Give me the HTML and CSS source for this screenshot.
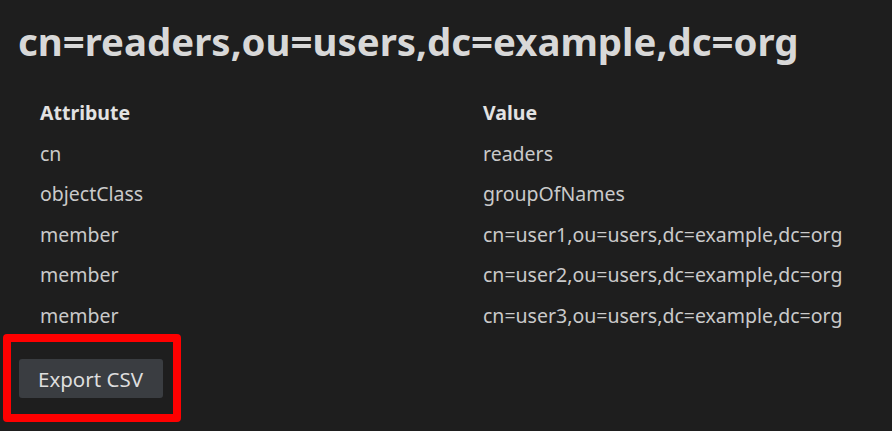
FILE: index.html
```html
<!DOCTYPE html>
<html lang="en">
<head>
<meta charset="utf-8">
<title>cn=readers,ou=users,dc=example,dc=org</title>
<link rel="stylesheet" href="styles.css">
</head>
<body>
<main class="page">
  <h1 class="entry-title">cn=readers,ou=users,dc=example,dc=org</h1>
  <table class="attr-table">
    <thead>
      <tr><th>Attribute</th><th>Value</th></tr>
    </thead>
    <tbody>
      <tr><td>cn</td><td>readers</td></tr>
      <tr><td>objectClass</td><td>groupOfNames</td></tr>
      <tr><td>member</td><td>cn=user1,ou=users,dc=example,dc=org</td></tr>
      <tr><td>member</td><td>cn=user2,ou=users,dc=example,dc=org</td></tr>
      <tr><td>member</td><td>cn=user3,ou=users,dc=example,dc=org</td></tr>
    </tbody>
  </table>
  <div class="actions">
    <button class="btn" type="button">Export CSV</button>
    <span class="highlight" aria-hidden="true"></span>
  </div>
</main>
</body>
</html>
```
FILE: styles.css
```css
html, body {
  margin: 0;
  padding: 0;
  background: #1e1e1e;
}
body {
  min-height: 431px;
  font-family: "Noto Sans", "Open Sans", sans-serif;
  color: #cacaca;
}
.page {
  padding: 18px 18px 40px 18px;
}
.entry-title {
  margin: 0;
  font-size: 38.4px;
  font-weight: 700;
  line-height: 46px;
  color: #d8d8d8;
}
.attr-table {
  margin: 29px 0 0 22px;
  border-collapse: collapse;
  font-size: 19.5px;
}
.attr-table th,
.attr-table td {
  padding: 0;
  height: 40.5px;
  line-height: 40.5px;
  text-align: left;
  vertical-align: middle;
  white-space: nowrap;
}
.attr-table th {
  font-weight: 700;
  color: #e2e2e2;
}
.attr-table th:first-child,
.attr-table td:first-child {
  width: 443px;
}
.actions {
  position: relative;
  margin: 23px 0 0 1px;
  width: 144px;
}
.btn {
  display: block;
  width: 144px;
  height: 39px;
  padding: 0 0 0 19px;
  border: 0;
  border-radius: 3px;
  background: #3a3d41;
  color: #dedede;
  font-family: "Noto Sans", "Open Sans", sans-serif;
  font-size: 20.5px;
  text-align: left;
}
.highlight {
  position: absolute;
  left: -16px;
  top: -25px;
  width: 162px;
  height: 72px;
  border: 8px solid #ff0000;
  border-radius: 4px;
  pointer-events: none;
}
```
